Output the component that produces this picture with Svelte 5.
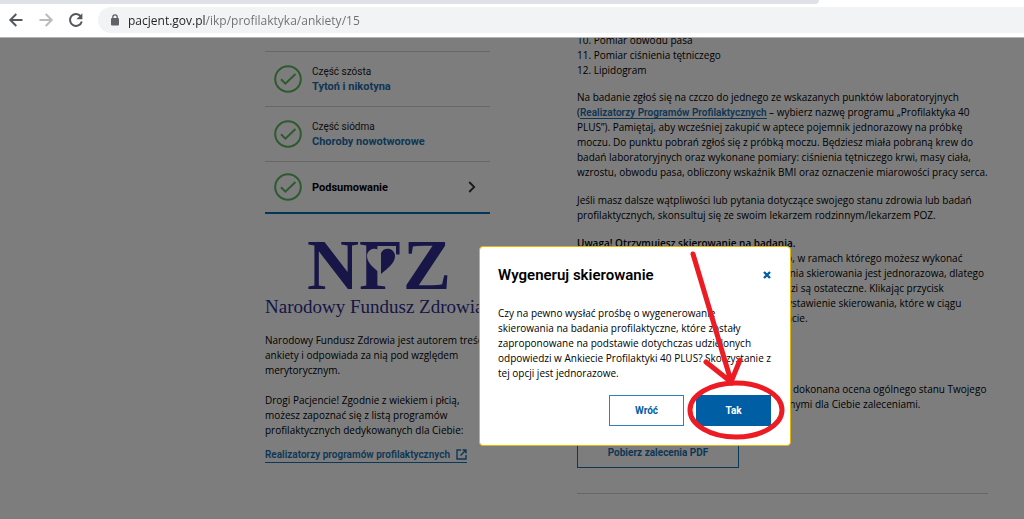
<script lang="ts">
  let isOpen = $state(true);
  let address = $state('pacjent.gov.pl/ikp/profilaktyka/ankiety/15');

  const steps = [
    { part: 'Część szósta', title: 'Tytoń i nikotyna' },
    { part: 'Część siódma', title: 'Choroby nowotworowe' },
    { part: '', title: 'Podsumowanie' },
  ];

  function handleClose() {
    isOpen = false;
  }

  function handleKeydown(e: KeyboardEvent) {
    if (e.key === 'Escape' && isOpen) {
      handleClose();
    }
  }
</script>

<svelte:window onkeydown={handleKeydown} />

<div class="browser">
  <header>
    <div class="tab-strip"></div>
    <div class="toolbar">
      <button class="nav-btn" aria-label="Wstecz">
        <svg width="16" height="16" viewBox="0 0 16 16" fill="none" stroke="#55585c" stroke-width="2" aria-hidden="true">
          <path d="M14.5 8H2.5M8.3 2L2.3 8l6 6" />
        </svg>
      </button>
      <button class="nav-btn" aria-label="Dalej" disabled>
        <svg width="16" height="16" viewBox="0 0 16 16" fill="none" stroke="#b9bbbd" stroke-width="2" aria-hidden="true">
          <path d="M1.5 8h12M7.7 2l6 6-6 6" />
        </svg>
      </button>
      <button class="nav-btn" aria-label="Odśwież">
        <svg width="16" height="16" viewBox="0 0 16 16" fill="none" stroke="#55585c" stroke-width="2" aria-hidden="true">
          <path d="M13 4.6A6 6 0 1 0 13.8 9.5" />
          <path d="M14.4 1.2v6H8.4z" fill="#55585c" stroke="none" />
        </svg>
      </button>
      <label class="address">
        <svg width="10" height="12" viewBox="0 0 10 12" aria-hidden="true">
          <rect x="1" y="4" width="8" height="7.5" rx="1" fill="#5f6368" />
          <path d="M2.8 4.5V3a2.2 2.2 0 0 1 4.4 0v1.5" fill="none" stroke="#5f6368" stroke-width="1.3" />
        </svg>
        <input type="text" aria-label="Adres strony" bind:value={address} />
      </label>
    </div>
  </header>

  <div class="viewport">
    <div class="page">
      <aside>
        <nav>
          {#each steps as step}
            <a class="step" class:current={!step.part} href="#ankieta">
              <svg class="check" width="28" height="28" viewBox="0 0 28 28" fill="none" stroke="#5cb85f" stroke-width="2" aria-hidden="true">
                <circle cx="14" cy="14" r="12.8" />
                <path d="M7 14.2l4.4 4.4L21.5 9" />
              </svg>
              <span class="step-text">
                {#if step.part}<span class="part">{step.part}</span>{/if}
                <strong>{step.title}</strong>
              </span>
              {#if !step.part}
                <svg width="8" height="12" viewBox="0 0 8 12" fill="none" stroke="#333" stroke-width="1.8" aria-hidden="true">
                  <path d="M1.2 1l5 5-5 5" />
                </svg>
              {/if}
            </a>
          {/each}
        </nav>

        <svg class="logo" width="225" height="84" viewBox="0 0 225 84" role="img" aria-label="Narodowy Fundusz Zdrowia">
          <text x="42" y="56" class="nfz">NFZ</text>
          <path d="M116 13h15v31h-15z" fill="#fff" />
          <path d="M116 41C109 35 102 30 102 23c0-8 11-10 14-3z" fill="#fff" />
          <path d="M116 41c7-6 14-11 14-18 0-8-11-10-14-3z" fill="#2f2d90" />
          <path d="M116 9h15v3h-15z" fill="#2f2d90" />
          <text x="0" y="80" class="fund">Narodowy Fundusz Zdrowia</text>
        </svg>

        <p>Narodowy Fundusz Zdrowia jest autorem treści ankiety i odpowiada za nią pod względem merytorycznym.</p>
        <p>Drogi Pacjencie! Zgodnie z wiekiem i płcią, możesz zapoznać się z listą programów profilaktycznych dedykowanych dla Ciebie:</p>
        <a class="external" href="#programy">
          Realizatorzy programów profilaktycznych
          <svg width="11" height="11" viewBox="0 0 11 11" fill="none" stroke="currentColor" stroke-width="1.4" aria-hidden="true">
            <path d="M5 1H1v9h9V6M6.5 1H10v3.5M10 1L4.5 6.5" />
          </svg>
        </a>
      </aside>

      <main>
        <ol start="10">
          <li>Pomiar obwodu pasa</li>
          <li>Pomiar ciśnienia tętniczego</li>
          <li>Lipidogram</li>
        </ol>
        <p>
          Na badanie zgłoś się na czczo do jednego ze wskazanych punktów laboratoryjnych<br />
          (<a href="#realizatorzy">Realizatorzy Programów Profilaktycznych</a> – wybierz nazwę programu „Profilaktyka 40<br />
          PLUS”). Pamiętaj, aby wcześniej zakupić w aptece pojemnik jednorazowy na próbkę<br />
          moczu. Do punktu pobrań zgłoś się z próbką moczu. Będziesz miała pobraną krew do<br />
          badań laboratoryjnych oraz wykonane pomiary: ciśnienia tętniczego krwi, masy ciała,<br />
          wzrostu, obwodu pasa, obliczony wskaźnik BMI oraz oznaczenie miarowości pracy serca.
        </p>
        <p>
          Jeśli masz dalsze wątpliwości lub pytania dotyczące swojego stanu zdrowia lub badań<br />
          profilaktycznych, skonsultuj się ze swoim lekarzem rodzinnym/lekarzem POZ.
        </p>
        <p class="notice">
          <strong>Uwaga! Otrzymujesz skierowanie na badania.</strong><br />
          Otrzymasz skierowanie z programu krajowego, w ramach którego możesz wykonać<br />
          te bezpłatne badania. Możliwość wygenerowania skierowania jest jednorazowa, dlatego<br />
          upewnij się dziś, że wszystkie Twoje odpowiedzi są ostateczne. Klikając przycisk<br />
          poniżej, potwierdzasz teraz swoją prośbę o wystawienie skierowania, które w ciągu<br />
          dwóch dni roboczych pojawi się na Twoim koncie.
        </p>
        <p class="summary">
          Na podstawie udzielonych odpowiedzi została dokonana ocena ogólnego stanu Twojego<br />
          zdrowia. Zapoznaj się dokładnie z przygotowanymi dla Ciebie zaleceniami.
        </p>
        <button class="pdf-btn">Pobierz zalecenia PDF</button>
        <hr />
      </main>
    </div>

    {#if isOpen}
      <div class="modal-overlay">
        <div class="modal" role="dialog" aria-modal="true" aria-labelledby="modal-title">
          <div class="modal-head">
            <h2 id="modal-title">Wygeneruj skierowanie</h2>
            <button class="close-btn" onclick={handleClose} aria-label="Zamknij">
              <svg width="8" height="8" viewBox="0 0 8 8" stroke="currentColor" stroke-width="2.4" aria-hidden="true">
                <path d="M1 1l6 6M7 1L1 7" />
              </svg>
            </button>
          </div>
          <p>
            Czy na pewno wysłać prośbę o wygenerowanie<br />
            skierowania na badania profilaktyczne, które zostały<br />
            zaproponowane na podstawie dotychczas udzielonych<br />
            odpowiedzi w Ankiecie Profilaktyki 40 PLUS? Skorzystanie z<br />
            tej opcji jest jednorazowe.
          </p>
          <div class="actions">
            <button onclick={handleClose}>Wróć</button>
            <button class="primary" onclick={handleClose}>Tak</button>
          </div>
          <svg class="marker" width="312" height="200" viewBox="0 0 312 200" fill="none" stroke="#ed1c24" stroke-width="5" stroke-linecap="round" aria-hidden="true">
            <path d="M214 8L252 135M227 116l25 20 9-22" />
            <ellipse cx="257" cy="164" rx="46" ry="27" />
          </svg>
        </div>
      </div>
    {/if}
  </div>
</div>

<style>
  :global(body) {
    margin: 0;
  }

  .browser {
    height: 100vh;
    display: flex;
    flex-direction: column;
    overflow: hidden;
    font-family: "Open Sans", "Noto Sans", sans-serif;
    font-size: 10px;
    line-height: 15px;
    color: #000;
  }

  header {
    background: #fff;
    border-bottom: 1px solid #b4b4b4;
  }

  .tab-strip {
    width: 80%;
    height: 4px;
    background: #dee1e6;
    border-bottom-right-radius: 4px;
  }

  .toolbar {
    display: flex;
    align-items: center;
    gap: 14px;
    padding: 3px 0 4px 8px;
  }

  button {
    font-family: Roboto, "Open Sans", sans-serif;
    cursor: pointer;
  }

  .nav-btn {
    display: flex;
    padding: 0;
    border: none;
    background: none;
  }

  .address {
    flex: 1;
    display: flex;
    align-items: center;
    gap: 8px;
    height: 26px;
    padding-left: 12px;
    background: #f1f3f4;
    border-radius: 13px 0 0 13px;
  }

  .address input {
    flex: 1;
    padding: 0;
    border: none;
    outline: none;
    font-family: "Open Sans", "Noto Sans", sans-serif;
    font-size: 12px;
    color: transparent;
    background: linear-gradient(to right, #202124 78px, #6b6f73 78px);
    background-clip: text;
  }

  .viewport {
    position: relative;
    flex: 1;
    overflow: hidden;
    background: #fff;
  }

  .page {
    display: grid;
    grid-template-columns: 225px 1fr;
    column-gap: 87px;
    padding: 0 36px 0 265px;
  }

  aside {
    padding-top: 13px;
  }

  .step {
    display: flex;
    align-items: center;
    gap: 10px;
    height: 54px;
    padding: 0 14px 0 9px;
    border-top: 1px solid #d2d2d2;
    color: #1d6fae;
    text-decoration: none;
  }

  .step.current {
    height: 50px;
    color: #000;
    border-bottom: 2px solid #0a6fb5;
  }

  .step-text {
    flex: 1;
  }

  .step strong {
    font-size: 11px;
    font-weight: 700;
  }

  .part {
    display: block;
    font-size: 10px;
    font-weight: 400;
    color: #222;
  }

  .logo {
    display: block;
    margin: 19px 0 16px;
    overflow: visible;
  }

  .nfz {
    font-family: "Liberation Serif", serif;
    font-size: 72px;
    font-weight: 700;
    fill: #2f2d90;
  }

  .fund {
    font-family: "Liberation Serif", serif;
    font-size: 19px;
    fill: #2f2d90;
  }

  p {
    margin: 0 0 13px;
  }

  p strong {
    font-weight: 600;
  }

  aside p {
    margin-bottom: 15px;
  }

  aside p:last-of-type {
    margin-bottom: 9px;
  }

  a {
    color: #1d6fae;
    font-family: Roboto, "Open Sans", sans-serif;
    font-weight: 600;
    text-decoration: none;
  }

  main a {
    border-bottom: 1px solid;
  }

  .external {
    display: inline-flex;
    align-items: center;
    gap: 6px;
    border-bottom: 1px solid;
    white-space: nowrap;
  }

  main {
    margin-top: -5px;
    white-space: nowrap;
  }

  ol {
    margin: 0 0 12px;
    padding: 0;
    list-style-position: inside;
  }

  .notice {
    margin-bottom: 56px;
  }

  .summary {
    margin-bottom: 24px;
  }

  .pdf-btn {
    display: block;
    width: 162px;
    height: 32px;
    border: 1px solid #1d6fae;
    background: #fff;
    color: #1d6fae;
    font-size: 10px;
    font-weight: 700;
  }

  hr {
    margin: 25px 0;
    border: none;
    border-top: 1px solid #d2d2d2;
  }

  .modal-overlay {
    position: absolute;
    inset: 0;
    display: flex;
    align-items: flex-start;
    padding: 208px 0 0 479px;
    background: rgba(0, 0, 0, 0.51);
  }

  .modal {
    position: relative;
    width: 312px;
    box-sizing: border-box;
    padding: 18px 19px 19px 18px;
    border: 1px solid #e3b505;
    border-radius: 4px;
    background: #fff;
    white-space: nowrap;
  }

  .modal-head {
    display: flex;
    align-items: center;
    justify-content: space-between;
    margin-bottom: 21px;
  }

  .modal p {
    margin-bottom: 14px;
  }

  h2 {
    margin: 0;
    font-family: Roboto, "Open Sans", sans-serif;
    font-size: 15px;
    font-weight: 600;
    line-height: 20px;
  }

  .close-btn {
    display: flex;
    padding: 0;
    border: none;
    background: none;
    color: #005ea5;
  }

  .actions {
    display: flex;
    justify-content: flex-end;
    gap: 12px;
  }

  .actions button {
    width: 75px;
    height: 31px;
    border: 1px solid #2f80bd;
    background: #fff;
    color: #005ea5;
    font-size: 10px;
    font-weight: 700;
  }

  .actions .primary {
    border-color: #005ea5;
    background: #005ea5;
    color: #fff;
  }

  .marker {
    position: absolute;
    top: -1px;
    left: -1px;
    pointer-events: none;
  }
</style>
